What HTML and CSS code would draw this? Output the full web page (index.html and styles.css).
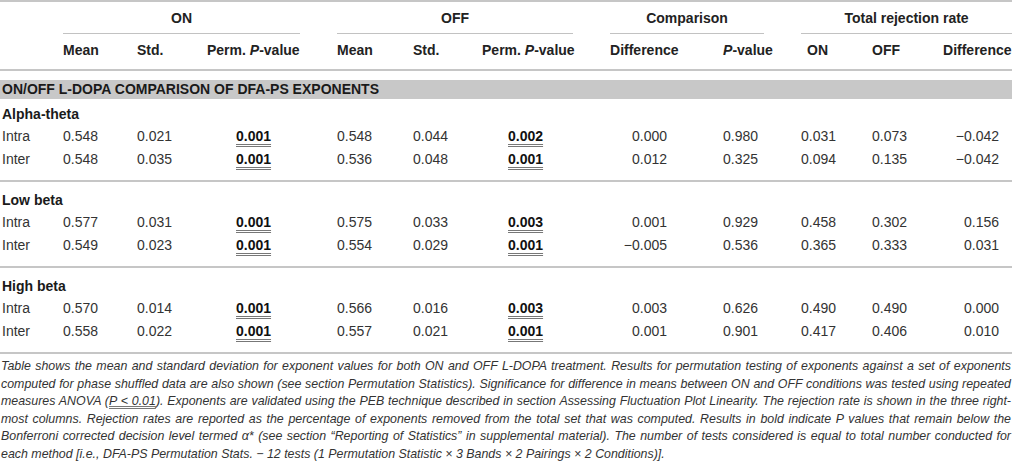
FILE: index.html
```html
<!DOCTYPE html>
<html lang="en">
<head>
<meta charset="utf-8">
<title>ON/OFF L-DOPA comparison of DFA-PS exponents</title>
<link rel="stylesheet" href="styles.css">
</head>
<body>
<div class="wrap">
<table class="data">
  <colgroup>
    <col class="c0"><col class="c1"><col class="c2"><col class="c3">
    <col class="c4"><col class="c5"><col class="c6"><col class="c7">
    <col class="c8"><col class="c9"><col class="c10"><col class="c11">
  </colgroup>
  <thead>
    <tr class="groups">
      <th></th>
      <th colspan="3"><span class="grp">ON</span></th>
      <th colspan="3"><span class="grp">OFF</span></th>
      <th colspan="2"><span class="grp">Comparison</span></th>
      <th colspan="3"><span class="grp last">Total rejection rate</span></th>
    </tr>
    <tr class="subs">
      <th></th>
      <th>Mean</th>
      <th>Std.</th>
      <th>Perm. <i>P</i>-value</th>
      <th>Mean</th>
      <th>Std.</th>
      <th>Perm. <i>P</i>-value</th>
      <th>Difference</th>
      <th><i>P</i>-value</th>
      <th class="rej-on">ON</th>
      <th>OFF</th>
      <th>Difference</th>
    </tr>
  </thead>
  <tbody class="band">
    <tr><td colspan="12"><div class="band-label">ON/OFF L-DOPA COMPARISON OF DFA-PS EXPONENTS</div></td></tr>
  </tbody>
  <tbody class="block first">
    <tr class="title"><td colspan="12">Alpha-theta</td></tr>
    <tr>
      <td class="lbl">Intra</td><td>0.548</td><td>0.021</td><td class="perm"><b class="sig">0.001</b></td>
      <td>0.548</td><td>0.044</td><td class="perm2"><b class="sig">0.002</b></td>
      <td class="diff">0.000</td><td>0.980</td><td>0.031</td><td>0.073</td><td class="rdiff">&minus;0.042</td>
    </tr>
    <tr class="last">
      <td class="lbl">Inter</td><td>0.548</td><td>0.035</td><td class="perm"><b class="sig">0.001</b></td>
      <td>0.536</td><td>0.048</td><td class="perm2"><b class="sig">0.001</b></td>
      <td class="diff">0.012</td><td>0.325</td><td>0.094</td><td>0.135</td><td class="rdiff">&minus;0.042</td>
    </tr>
  </tbody>
  <tbody class="block">
    <tr class="title"><td colspan="12">Low beta</td></tr>
    <tr>
      <td class="lbl">Intra</td><td>0.577</td><td>0.031</td><td class="perm"><b class="sig">0.001</b></td>
      <td>0.575</td><td>0.033</td><td class="perm2"><b class="sig">0.003</b></td>
      <td class="diff">0.001</td><td>0.929</td><td>0.458</td><td>0.302</td><td class="rdiff">0.156</td>
    </tr>
    <tr class="last">
      <td class="lbl">Inter</td><td>0.549</td><td>0.023</td><td class="perm"><b class="sig">0.001</b></td>
      <td>0.554</td><td>0.029</td><td class="perm2"><b class="sig">0.001</b></td>
      <td class="diff">&minus;0.005</td><td>0.536</td><td>0.365</td><td>0.333</td><td class="rdiff">0.031</td>
    </tr>
  </tbody>
  <tbody class="block">
    <tr class="title"><td colspan="12">High beta</td></tr>
    <tr>
      <td class="lbl">Intra</td><td>0.570</td><td>0.014</td><td class="perm"><b class="sig">0.001</b></td>
      <td>0.566</td><td>0.016</td><td class="perm2"><b class="sig">0.003</b></td>
      <td class="diff">0.003</td><td>0.626</td><td>0.490</td><td>0.490</td><td class="rdiff">0.000</td>
    </tr>
    <tr class="last">
      <td class="lbl">Inter</td><td>0.558</td><td>0.022</td><td class="perm"><b class="sig">0.001</b></td>
      <td>0.557</td><td>0.021</td><td class="perm2"><b class="sig">0.001</b></td>
      <td class="diff">0.001</td><td>0.901</td><td>0.417</td><td>0.406</td><td class="rdiff">0.010</td>
    </tr>
  </tbody>
</table>
<p class="note">Table shows the mean and standard deviation for exponent values for both ON and OFF L-DOPA treatment. Results for permutation testing of exponents against a set of exponents computed for phase shuffled data are also shown (see section Permutation Statistics). Significance for difference in means between ON and OFF conditions was tested using repeated measures ANOVA (<span class="dbl">P &lt; 0.01</span>). Exponents are validated using the PEB technique described in section Assessing Fluctuation Plot Linearity. The rejection rate is shown in the three right-most columns. Rejection rates are reported as the percentage of exponents removed from the total set that was computed. Results in bold indicate P values that remain below the Bonferroni corrected decision level termed &alpha;* (see section &ldquo;Reporting of Statistics&rdquo; in supplemental material). The number of tests considered is equal to total number conducted for each method [i.e., DFA-PS Permutation Stats. &minus; 12 tests (1 Permutation Statistic &times; 3 Bands &times; 2 Pairings &times; 2 Conditions)].</p>
</div>
</body>
</html>
```

FILE: styles.css
```css
html, body {
  margin: 0;
  padding: 0;
  background: #ffffff;
}

body {
  font-family: "Liberation Sans", Arial, Helvetica, sans-serif;
  color: #333333;
  width: 1012px;
  overflow: hidden;
}

.wrap {
  width: 1012px;
}

.data {
  width: 1012px;
  table-layout: fixed;
  border-collapse: collapse;
  border-top: 2px solid #c6c6c6;
  font-size: 14px;
}

.c0 { width: 63px; }
.c1 { width: 74px; }
.c2 { width: 70px; }
.c3 { width: 130px; }
.c4 { width: 76px; }
.c5 { width: 69px; }
.c6 { width: 128px; }
.c7 { width: 113px; }
.c8 { width: 78px; }
.c9 { width: 71px; }
.c10 { width: 71px; }
.c11 { width: 69px; }

.data th,
.data td {
  padding: 0;
  text-align: left;
  white-space: nowrap;
  vertical-align: middle;
}

.data th {
  font-weight: bold;
  color: #222222;
}

.data th i {
  font-style: italic;
}

/* group header row */
.groups th {
  padding-top: 7px;
  line-height: 18px;
}

.grp {
  display: block;
  text-align: center;
  margin-right: 37px;
  padding-bottom: 6px;
  border-bottom: 1px solid #c2c2c2;
}

.grp.last {
  margin-right: 0;
}

/* sub header row */
.subs th {
  padding-top: 7px;
  padding-bottom: 10px;
  line-height: 18px;
}

.subs {
  border-bottom: 2px solid #c6c6c6;
}

.subs th.rej-on {
  padding-left: 6px;
}

/* band */
.band td {
  padding-top: 9px;
}

.band-label {
  background: #c8c8c8;
  color: #1a1a1a;
  font-weight: bold;
  font-size: 14px;
  line-height: 19px;
  padding-left: 2px;
}

/* blocks */
.block {
  border-bottom: 2px solid #c6c6c6;
}

.block td {
  line-height: 23px;
}

.block .title td {
  font-weight: bold;
  color: #1a1a1a;
  line-height: 22px;
  padding-top: 7px;
  padding-left: 2px;
}

.block.first .title td {
  padding-top: 4px;
}

.block tr.last td {
  padding-bottom: 9px;
}

.data td.lbl {
  padding-left: 2px;
}

.data td.perm {
  padding-left: 29px;
}

.data td.perm2 {
  padding-left: 26px;
}

.data td.diff {
  text-align: right;
  padding-right: 56px;
}

.data td.rdiff {
  text-align: right;
  padding-right: 13px;
}

.sig {
  font-weight: bold;
  color: #111111;
  text-decoration: underline double #777777;
  text-underline-offset: 3px;
}

/* footnote */
.note {
  margin: 4px 0 0 0;
  padding: 0 1px;
  font-size: 12.4px;
  font-style: italic;
  line-height: 17.6px;
  text-align: justify;
  color: #333333;
}

.dbl {
  text-decoration: underline double #777777;
  text-underline-offset: 1px;
}
```
